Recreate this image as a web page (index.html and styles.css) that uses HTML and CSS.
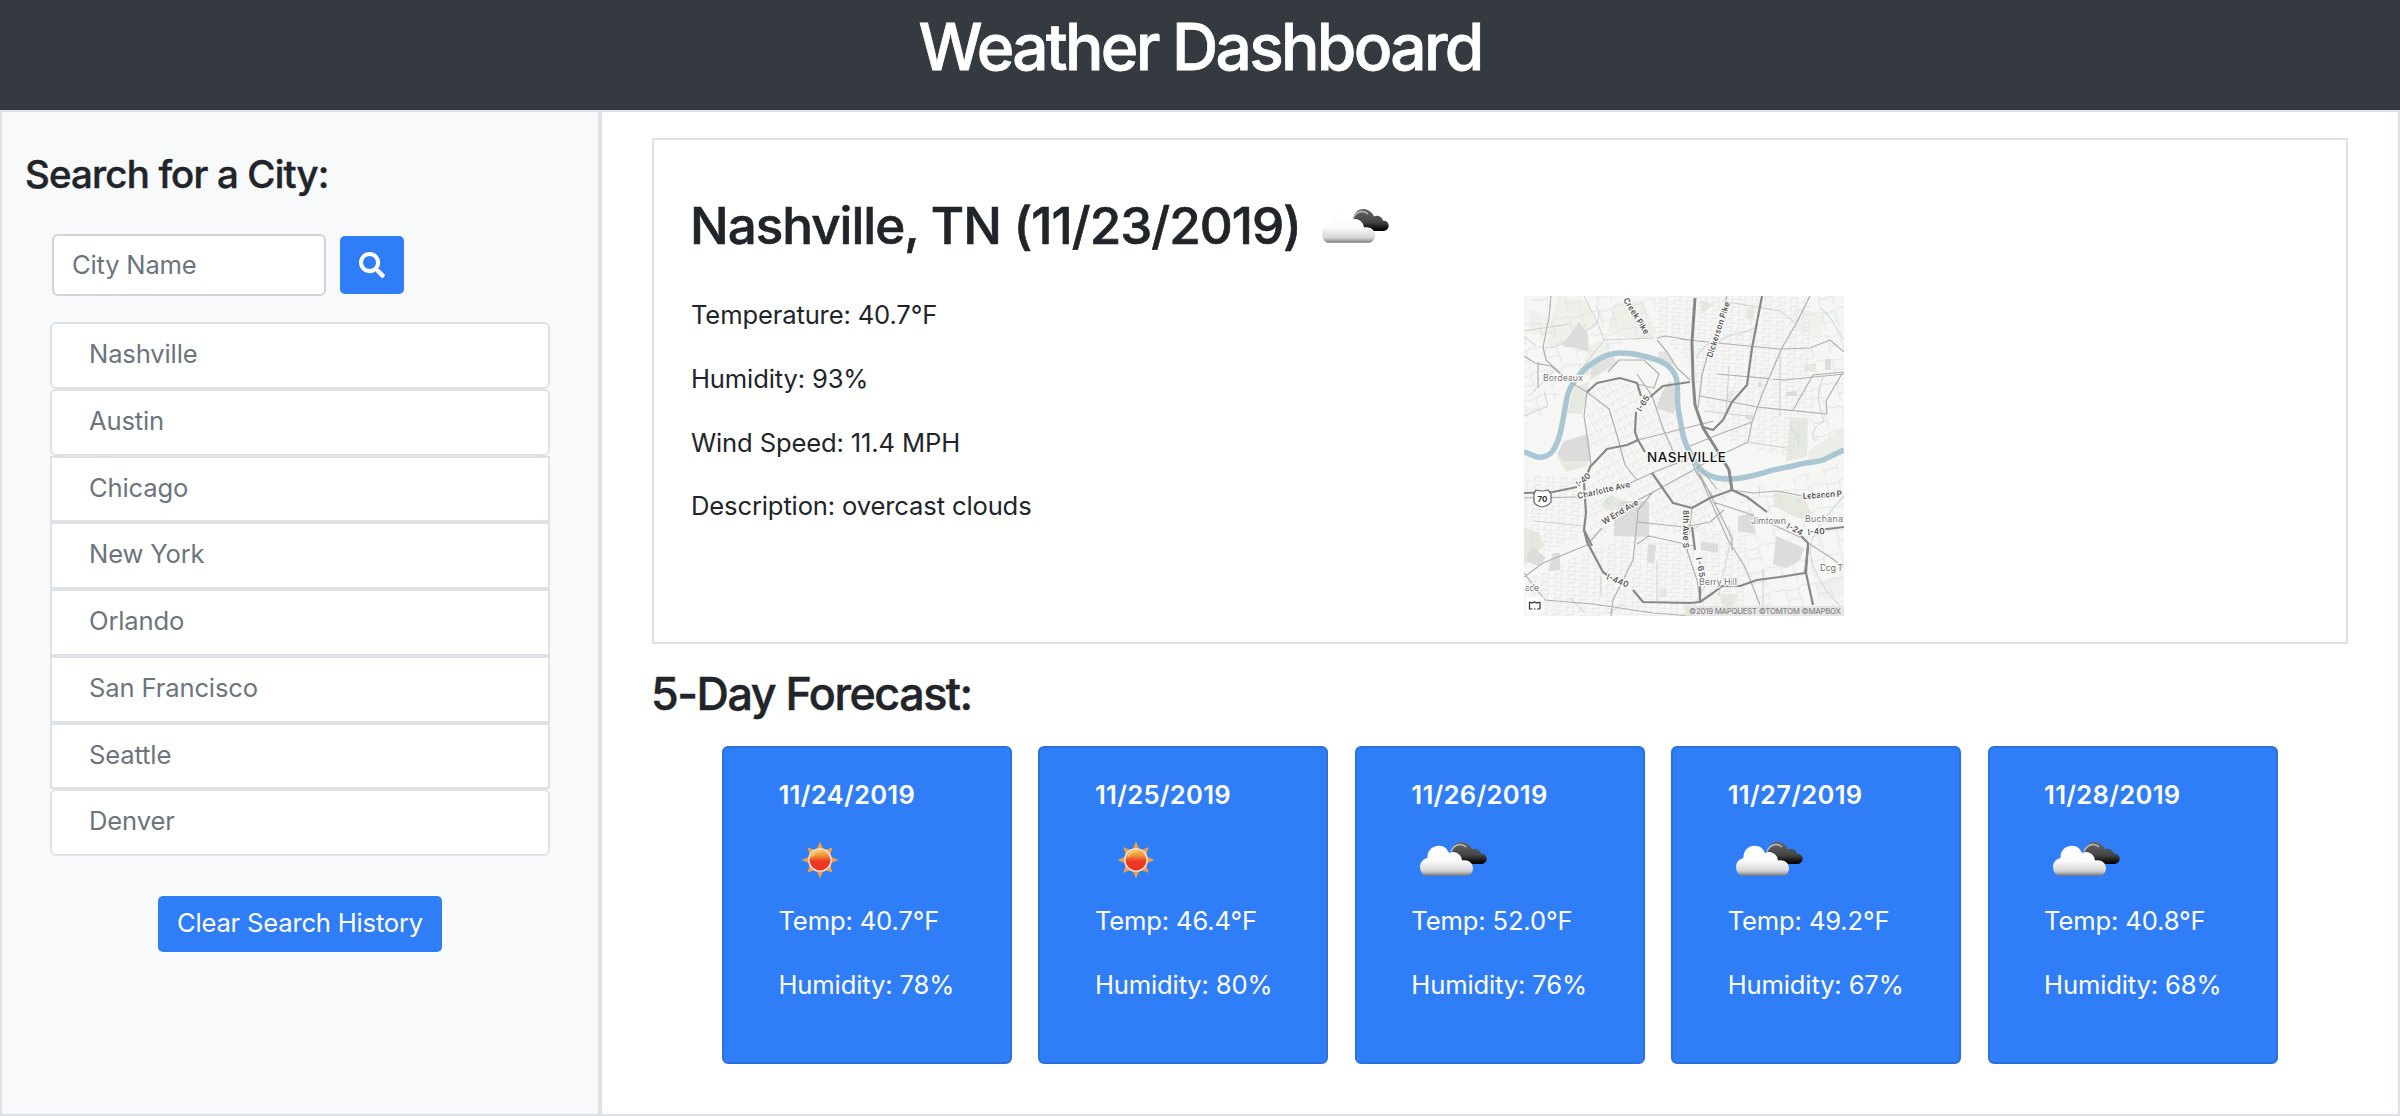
FILE: index.html
```html
<!DOCTYPE html>
<html lang="en">
<head>
<meta charset="utf-8">
<title>Weather Dashboard</title>
<link rel="stylesheet" href="styles.css">
</head>
<body>
<svg class="defs" width="0" height="0" aria-hidden="true">
  <defs>
    <linearGradient id="white-cloud" x1="0" y1="0" x2="0" y2="1">
      <stop offset="0" stop-color="#fff"/><stop offset=".5" stop-color="#fbfbfb"/><stop offset=".83" stop-color="#d6d6d6"/><stop offset=".92" stop-color="#aaa"/><stop offset="1" stop-color="#777"/>
    </linearGradient>
    <linearGradient id="dark-cloud" x1="0" y1="0" x2="0" y2="1">
      <stop offset="0" stop-color="#666"/><stop offset=".6" stop-color="#444"/><stop offset=".85" stop-color="#151515"/><stop offset="1" stop-color="#000"/>
    </linearGradient>
    <linearGradient id="sun-core" x1="0" y1="0" x2="0" y2="1">
      <stop offset="0" stop-color="#f8c25a"/><stop offset=".28" stop-color="#f29a3a"/><stop offset=".55" stop-color="#ee3a24"/><stop offset="1" stop-color="#ea2f20"/>
    </linearGradient>
    <symbol id="clouds" viewBox="0 0 68 36">
      <path d="M35 22H61.500C64.500 22 66.700 19.500 66.700 16.800C66.700 13.500 64 11.500 61 11.800C60.500 8 55.500 5.500 52 7.500C50 2.500 45.500 0 41 0C36 0 32 4 31.500 9Z" fill="url(#dark-cloud)"/>
      <path d="M31 9.500C33 5 36 2.500 40 2.500C43 2.500 44.500 3.500 46 5" fill="none" stroke="#ccc" stroke-width="1.500" opacity=".85"/>
      <path d="M6 33.700C2.500 33.500 0 29 0 25C0 20.500 3 17 7.500 16C7 9 12 3.800 19 3.800C24 3.800 27.500 7 29 11C35 8 41.500 12 42 18.500C47.500 17 53 20.500 53 26C53 30 50.500 33.700 47 33.700Z" fill="url(#white-cloud)"/>
    </symbol>
    <symbol id="sun" viewBox="-20 -20 40 40">
      <path d="M0-18.500L3.800-9.500L12.800-12.800L9.500-3.800L18.500 0L9.500 3.800L12.800 12.800L3.800 9.500L0 18.500L-3.800 9.500L-12.800 12.800L-9.500 3.800L-18.500 0L-9.500-3.800L-12.800-12.800L-3.800-9.500Z" fill="#f2a044"/>
      <circle r="11.200" fill="url(#sun-core)" stroke="#fbdcc4" stroke-width="1.600"/>
      <path d="M-8-3C-6-8-2-9 2-9" fill="none" stroke="#fce08a" stroke-width="1.500" opacity=".7"/>
    </symbol>
  </defs>
</svg>

<header class="banner"><h1>Weather Dashboard</h1></header>

<div class="page">
  <aside class="sidebar">
    <h4>Search for a City:</h4>
    <form class="search">
      <input class="search-input" type="text" placeholder="City Name" aria-label="City Name">
      <button class="btn search-btn" type="button" aria-label="Search">
        <svg viewBox="0 0 512 512" width="26" height="26"><path fill="#fff" d="M505 442.700L405.300 343c-4.500-4.500-10.600-7-17-7H372c27.600-35.300 44-79.700 44-128C416 93.100 322.900 0 208 0S0 93.100 0 208s93.100 208 208 208c48.300 0 92.700-16.400 128-44v16.300c0 6.400 2.500 12.500 7 17l99.700 99.700c9.400 9.400 24.600 9.400 33.900 0l28.300-28.300c9.400-9.400 9.400-24.600.1-34zM208 336c-70.700 0-128-57.200-128-128 0-70.700 57.200-128 128-128 70.700 0 128 57.200 128 128 0 70.700-57.200 128-128 128z"/></svg>
      </button>
    </form>
    <ul class="history">
      <li class="round">Nashville</li>
      <li class="round">Austin</li>
      <li>Chicago</li>
      <li>New York</li>
      <li>Orlando</li>
      <li>San Francisco</li>
      <li>Seattle</li>
      <li class="round">Denver</li>
    </ul>
    <button class="btn clear-btn" type="button">Clear Search History</button>
  </aside>

  <main class="content">
    <section class="current">
      <h2>Nashville, TN (11/23/2019) <svg class="clouds"><use href="#clouds"/></svg></h2>
      <div class="current-row">
        <div class="readings">
          <p>Temperature: 40.7°F</p>
          <p>Humidity: 93%</p>
          <p>Wind Speed: 11.4 MPH</p>
          <p>Description: overcast clouds</p>
        </div>
        <svg class="map" viewBox="0 0 320 320" role="img" aria-label="Map of Nashville">
          <defs>
            <pattern id="grid-a" width="13" height="8" patternUnits="userSpaceOnUse" patternTransform="rotate(3)"><path d="M0 0H13M0 0V8M7 4H13M7 4V8" class="street"/></pattern>
            <pattern id="grid-b" width="11" height="9" patternUnits="userSpaceOnUse" patternTransform="rotate(-28)"><path d="M0 0H11M0 0V9M5 0V5" class="street"/></pattern>
            <pattern id="grid-c" width="31" height="24" patternUnits="userSpaceOnUse" patternTransform="rotate(-12)"><path d="M0 6C8 3 12 10 20 7S28 3 31 6M9 7V24M22 7C20 14 25 17 22 24M9 17H22" class="street"/></pattern>
          </defs>
          <rect width="320" height="320" fill="#f6f6f5"/>
          <g class="park">
            <path d="M35 0L62 5L72 30L45 47L22 50L28 20ZM90 8L118 5L133 38L110 44L84 35Z" opacity=".5"/>
            <path d="M62 55L74 45L86 49L83 70L72 82L60 78Z" opacity=".5"/>
            <path d="M65 85L50 92L43 117L58 118L63 98Z"/>
            <path d="M33 160L66 150L63 170L42 176Z"/>
            <path d="M0 232L15 237L20 250L0 270ZM176 5L190 8L178 18ZM223 12L231 12L229 24L222 23Z"/>
            <path d="M266 121L284 122L283 160L262 166Z"/>
            <path d="M285 155L320 130V156L299 164L284 165Z" opacity=".6"/>
            <path d="M250 196L280 202L290 222L273 222L250 210Z"/>
            <path d="M76 210L87 199L100 205L88 216Z"/>
            <path d="M194 297L214 299L208 313L198 309ZM280 68L292 68L292 76L280 75ZM136 293H143V301H136ZM203 96L210 92L208 104L202 106Z"/>
            <path d="M5 12L25 20L20 40L5 36ZM270 10L300 20L296 40L270 34ZM290 285L320 280V300L300 305Z" opacity=".35"/>
          </g>
          <path d="M0 20H85V60L63 90L45 80L20 120L0 130ZM0 0H130V44L90 50L40 20ZM285 0H320V150L290 145ZM215 200L320 165V320H236L225 275Z" fill="url(#grid-c)"/>
          <path d="M190 0H285L290 120L263 160L205 146L176 96L160 60L130 35V0ZM0 180H60V240L0 268ZM65 255L105 240L170 250V320H20L0 285ZM176 235H222V320H176Z" fill="url(#grid-a)"/>
          <path d="M60 95L96 84L115 92L150 85L158 150L178 180L205 175L208 194L190 235L160 240L110 225L63 250V190L85 155L64 150Z" fill="url(#grid-b)"/>
          <g class="block">
            <path d="M55 26L64 38V56L52 52L38 50ZM40 145L64 138L67 165L40 165L33 158ZM146 85L152 95L150 118L132 112L138 96Z"/>
            <path d="M68 66L90 60L93 68L66 84ZM134 56L142 55L150 64L149 72L135 66Z" opacity=".7"/>
            <path d="M97 205H125V241L90 240L90 219ZM29 257H36V274L24 275ZM8 250L22 262L14 270L2 265ZM124 248L132 249L130 268L123 266Z"/>
            <path d="M214 220L230 217L231 238L214 235ZM252 240L280 252L276 264L262 272L249 268ZM301 63H307V74H301ZM262 96L273 95V100H262ZM177 246L194 248V257L177 254ZM234 86H238V91H234ZM223 118L229 119L228 124L222 123Z"/>
          </g>
          <g class="creek">
            <path d="M21 51C35 55 45 40 60 35S78 20 72 9M0 40L12 50M193 48C205 35 220 40 234 30M172 62C180 50 183 45 197 46M296 12C308 20 311 32 320 44M266 130C272 140 276 141 274 150M320 200C310 212 302 218 290 240C280 255 292 290 320 313M205 230C210 250 198 270 195 300M85 317L100 308M46 302L60 316"/>
            <path d="M81 205L85 202L88 206L84 208Z"/>
          </g>
          <path class="river" d="M0 156C8 158 13 163 19 161C28 159 30 153 33 147C38 135 39 122 41 112C43 102 43 96 48 89C54 80 61 71 69 67C78 60 87 57 96 57C106 57 112 58 119 60C128 62 137 64 143 69C150 75 153 80 153 87C154 98 153 104 154 112C156 123 157 130 159 139C161 147 166 158 172 167C176 175 184 180 193 182C210 185 224 181 239 177C253 172 262 172 273 169C282 166 290 167 299 164L320 154"/>
          <path class="minor" d="M27 0L25 22L19 51L22 64L46 86L63 96L85 113L93 139L101 169L113 184M0 60L11 67L27 70L46 86M133 42L141 40L166 44M133 44L143 56L153 72L166 84M113 78L128 100L140 135L149 155M203 0L198 18M183 61L178 79L174 112M156 43L193 47L256 53L286 52L306 44L320 56M176 100L203 105L233 111L303 118L302 105L319 76L289 79L269 114M286 0L273 26L258 52L239 96L228 126L224 146L201 157M228 126L193 139L166 150M193 78L260 84L320 78M114 144L190 125M0 281L19 267L63 249L78 232M114 204L129 196L173 172L199 155M0 202L53 201M106 187L128 177L166 162L173 178L190 202M0 277L21 304L69 308L129 317L170 320M87 320L89 304L109 264L113 226L114 214L129 196M189 206L223 217L276 241M208 194L229 197L253 195L278 200M168 212L163 254L173 284L176 304M173 174L204 244L221 271L236 309M176 178L208 242V254M63 96L60 120L66 160L67 170M114 226L160 231L186 226L200 214M113 248L125 240L170 250M84 76L95 64L120 64L135 78L130 92L113 88M14 66V92M284 247L306 261L319 271M178 174L193 193"/>
          <path class="thin" d="M60 0L74 28L80 44L60 70L46 86M0 35L45 28M80 44L130 42M198 5L256 15L270 26M5 100L30 75M0 120L24 110L20 95M182 225L165 236M235 200L236 190M224 146L262 152M239 273V320M10 225L60 230M77 280V300M133 265V305M184 285L170 310M256 53V120M300 80C290 100 296 110 300 125C290 130 285 140 292 145M205 70L202 120M180 115L224 120"/>
          <g class="highway">
            <path class="wide" d="M171 2L168 46L169 82L171 109L179 132L193 154L205 174L208 194"/>
            <path d="M238 0L228 52L223 89L208 106L199 124L189 134L179 131"/>
            <path d="M126 101L139 90L166 86M112 116L111 136L114 144L121 156M63 96L73 87L96 82L113 87L117 100M114 144L103 149L83 153L66 171L60 187L62 217L60 234L63 246L79 276L90 284M109 294L119 306L166 307L176 306L189 297L198 290L216 290L233 284L256 281L281 277L284 251"/>
            <path d="M0 197L29 196L53 191M128 177L149 207L168 212L186 202L208 194L223 201L243 216M270 233L284 247L282 277L289 309M295 234L320 231M168 231L171 254M176 290L176 306M60 234L68 250"/>
          </g>
          <g class="place">
            <text x="19" y="85" textLength="40">Bordeaux</text>
            <text x="1" y="295" textLength="14">ade</text>
            <text x="227" y="228" textLength="35">Jimtown</text>
            <text x="281" y="226" textLength="38">Buchana</text>
            <text x="175" y="289" textLength="38">Berry Hill</text>
            <text x="296" y="275" textLength="23">Dog T</text>
          </g>
          <g class="road-name">
            <text transform="translate(99 4) rotate(58)" textLength="41">Creek Pike</text>
            <text transform="translate(188 62) rotate(-72)" textLength="58">Dickerson Pike</text>
            <text transform="translate(117 116) rotate(-58)" textLength="17">I-65</text>
            <text transform="translate(55 191) rotate(-40)" textLength="16">I-40</text>
            <text transform="translate(54 203) rotate(-13)" textLength="54">Charlotte Ave</text>
            <text transform="translate(80 229) rotate(-31)" textLength="41">W End Ave</text>
            <text transform="translate(82 283) rotate(22)" textLength="23">I-440</text>
            <text transform="translate(159 214) rotate(90)" textLength="38">8th Ave S</text>
            <text transform="translate(172 262) rotate(80)" textLength="20">I-65</text>
            <text transform="translate(262 232) rotate(27)" textLength="17">I-24</text>
            <text transform="translate(284 239) rotate(-4)" textLength="17">I-40</text>
            <text transform="translate(279 203) rotate(-4)" textLength="39">Lebanon P</text>
          </g>
          <path d="M12 194Q18 196 24 194L27 198V206Q24 210 18 211Q12 210 10 206V198Z" fill="#fff" stroke="#666" stroke-width="1.200"/>
          <text class="shield" x="13.500" y="205.500" textLength="10">70</text>
          <text class="city" x="123" y="166" textLength="79">NASHVILLE</text>
          <rect x="2" y="301" width="18" height="16" rx="2" fill="#fff" opacity=".9"/>
          <path d="M5.500 306V313H8.500M16 313V306M5.500 306L8 307L10.500 306L13 307L16 306M10 313H11.500M13 313H16" fill="none" stroke="#333" stroke-width="1.200"/>
          <rect x="161" y="310" width="159" height="10" fill="#e3e3e2" opacity=".85"/>
          <text class="credit" x="165" y="318" textLength="152">©2019 MAPQUEST ©TOMTOM ©MAPBOX</text>
        </svg>
      </div>
    </section>

    <h3>5-Day Forecast:</h3>
    <div class="forecast">
      <article class="day"><h5>11/24/2019</h5><svg class="sun"><use href="#sun"/></svg><p>Temp: 40.7°F</p><p>Humidity: 78%</p></article>
      <article class="day"><h5>11/25/2019</h5><svg class="sun"><use href="#sun"/></svg><p>Temp: 46.4°F</p><p>Humidity: 80%</p></article>
      <article class="day"><h5>11/26/2019</h5><svg class="clouds"><use href="#clouds"/></svg><p>Temp: 52.0°F</p><p>Humidity: 76%</p></article>
      <article class="day"><h5>11/27/2019</h5><svg class="clouds"><use href="#clouds"/></svg><p>Temp: 49.2°F</p><p>Humidity: 67%</p></article>
      <article class="day"><h5>11/28/2019</h5><svg class="clouds"><use href="#clouds"/></svg><p>Temp: 40.8°F</p><p>Humidity: 68%</p></article>
    </div>
  </main>
</div>
</body>
</html>
```
FILE: styles.css
```css
* { box-sizing: border-box; }

body {
  margin: 0;
  height: 1116px;
  display: flex;
  flex-direction: column;
  overflow: hidden;
  background: #fff;
  color: #212529;
  font: 400 25.6px/1.5 Inter, "Liberation Sans", sans-serif;
}

h1, h2, h3, h4, h5, p, ul { margin: 0; padding: 0; }
h1, h2, h3, h4 { font-weight: 500; -webkit-text-stroke: .012em currentColor; }
h5 { font-weight: 600; }
.defs { position: absolute; }

.banner {
  height: 112px;
  flex: none;
  padding-top: 9px;
  background: #343a40;
  border-bottom: 2px solid #dee2e6;
  color: #fff;
  text-align: center;
}
.banner h1 { font-size: 64px; line-height: 76.8px; letter-spacing: -2.7px; }

.page {
  flex: 1;
  display: flex;
  border: solid #dee2e6;
  border-width: 0 2px 2px;
}

.sidebar {
  width: 600px;
  flex: none;
  display: flex;
  flex-direction: column;
  padding: 39px 48px 0;
  background: #f8f9fa;
  border-right: 4px solid #dee2e6;
}
.sidebar h4 {
  margin-left: -25px;
  font-size: 38.4px;
  line-height: 46px;
  letter-spacing: -.82px;
}

.search { display: flex; align-items: flex-start; gap: 14px; margin: 37px 0 0 2px; }
.search-input {
  width: 274px;
  height: 62px;
  padding: 0 18px 2px;
  border: 2px solid #ced4da;
  border-radius: 6px;
  background: #fff;
  font: inherit;
  letter-spacing: -.2px;
}
.search-input::placeholder { color: #6c757d; opacity: 1; }

.btn {
  border: 0;
  border-radius: 5px;
  background: #2f7ef8;
  color: #fff;
  font: inherit;
}
.search-btn {
  width: 64px;
  height: 58px;
  margin-top: 2px;
  padding: 0;
  display: flex;
  align-items: center;
  justify-content: center;
}

.history { list-style: none; height: 534px; margin-top: 26px; display: flex; flex-direction: column; }
.history li {
  flex: 1;
  padding: 11px 37px 0;
  border: 2px solid #dee2e6;
  background: #fff;
  color: #6c757d;
  letter-spacing: -.15px;
}
.history .round { border-radius: 6px; }

.clear-btn {
  align-self: center;
  width: 284px;
  height: 56px;
  margin-top: 40px;
  padding: 0 0 2px;
  letter-spacing: -.2px;
}

.content { flex: 1; padding: 26px 50px 0; }

.current {
  height: 506px;
  padding: 55px 36px 0;
  border: 2px solid #dee2e6;
}
.current h2 { display: flex; align-items: center; font-size: 51.2px; line-height: 61px; letter-spacing: -1.03px; }
.clouds { display: block; width: 68px; height: 36px; flex: none; }
.current .clouds { margin: 2px 0 0 21px; }
.current-row { display: flex; margin-top: 40px; }
.readings { width: 834px; padding-left: 1px; letter-spacing: -.15px; }
.readings p { height: 64px; }
.readings p:last-child { margin-top: -1px; }

.map { display: block; width: 320px; height: 320px; overflow: hidden; font-family: Inter, sans-serif; }
.street { fill: none; stroke: #dededd; stroke-width: .8; }
.park { fill: #e5e9df; }
.block { fill: #dcdcdb; }
.creek { fill: none; stroke: #cfdde2; stroke-width: 1.2; }
.river { fill: none; stroke: #a9c6d3; stroke-width: 5.5; stroke-linejoin: round; }
.minor { fill: none; stroke: #b0b0af; stroke-width: 1.2; stroke-linejoin: round; }
.thin { fill: none; stroke: #c6c6c5; stroke-width: .8; }
.highway { fill: none; stroke: #888; stroke-width: 2.2; stroke-linejoin: round; }
.wide { stroke-width: 3; }
.place { font-size: 9px; fill: #777; }
.place text, .road-name text, .city { paint-order: stroke; stroke: #f8f8f7; stroke-width: 2.5px; stroke-linejoin: round; }
.road-name { font-size: 8.2px; font-weight: 600; fill: #555; }
.city { font-size: 13.5px; font-weight: 500; fill: #111; }
.shield { font-size: 8px; font-weight: 700; fill: #333; }
.credit { font-size: 7.8px; font-weight: 500; fill: #888; }

.content h3 { margin-top: 23px; margin-left: -1px; font-size: 44.8px; line-height: 54px; letter-spacing: -1.45px; }

.forecast { display: flex; gap: 26.400px; margin: 25px 0 0 70px; }
.day {
  width: 290px;
  height: 318px;
  flex: none;
  padding: 28px 0 0 54.500px;
  border: 2px solid #2b71dd;
  border-radius: 6px;
  background: #2f7ef8;
  color: #fff;
}
.day h5 { font-size: 25.600px; line-height: 38.400px; letter-spacing: .3px; }
.day svg { display: block; }
.day .clouds { margin: 28px 0 24px 8.500px; }
.day .sun { width: 40px; height: 40px; margin: 26px 0 22px 21.500px; }
.day p { height: 64px; letter-spacing: -.15px; }
```
